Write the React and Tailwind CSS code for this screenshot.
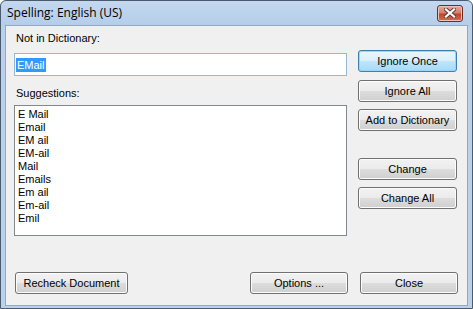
import React from 'react'

const suggestions = ['E Mail', 'Email', 'EM ail', 'EM-ail', 'Mail', 'Emails', 'Em ail', 'Em-ail', 'Emil']

function Button({ label, primary, className = '' }) {
  const look = primary
    ? 'border-[#3c7fb1] bg-[linear-gradient(#eaf6fd,#d9f0fc_50%,#bee6fd_50%,#a7d9f5)] shadow-[inset_0_0_0_1px_#9ad7f7]'
    : 'border-[#707070] bg-[linear-gradient(#f2f2f2,#ebebeb_50%,#dddddd_50%,#cfcfcf)] shadow-[inset_0_0_0_1px_#fcfcfc]'
  return (
    <button
      className={`h-[22px] rounded-[3px] border text-[11px] leading-none text-black flex items-center justify-center ${look} ${className}`}
    >
      {label}
    </button>
  )
}

export default function App() {
  return (
    <div
      className="w-[473px] h-[309px] flex flex-col rounded-t-[6px] border border-[#4b5a6e] bg-[linear-gradient(#c4d8ef,#b4cde9_25px,#b9d1ea_25px)] text-black"
      style={{ fontFamily: '"Liberation Sans", Arial, sans-serif' }}
    >
      {/* Title bar */}
      <div className="h-[24px] flex items-center justify-between pl-[6px] pr-[9px] shrink-0">
        <span className="text-[12px] leading-none text-black" style={{ fontFamily: '"Open Sans", "Liberation Sans", sans-serif' }}>
          Spelling: English (US)
        </span>
        <div className="w-[26px] h-[17px] rounded-[3px] border border-[#6e2d24] bg-[linear-gradient(#e9a99b,#d47f6d_45%,#c1432b_55%,#d0705a)] flex items-center justify-center shadow-[inset_0_0_0_1px_#f0c2b8]">
          <svg width="12" height="10" viewBox="0 0 12 10">
            <path d="M2 1.5 L10 8.5 M10 1.5 L2 8.5" stroke="#5a3a35" strokeWidth="4" strokeLinecap="square" />
            <path d="M2 1.5 L10 8.5 M10 1.5 L2 8.5" stroke="#ffffff" strokeWidth="2.2" strokeLinecap="square" />
          </svg>
        </div>
      </div>

      {/* Client area */}
      <div className="flex-1 mx-[4px] mb-[2px] border border-[#8fa9c6] bg-[#f0f0f0] flex flex-col">
        <div className="flex">
          {/* Left column */}
          <div className="w-[333px] ml-[8px] flex flex-col">
            <div className="mt-[6px] pl-[2px] text-[11px] leading-[13px]">Not in Dictionary:</div>
            <div className="mt-[8px] h-[23px] border border-[#98b8d8] bg-white flex items-center pl-[1px]">
              <span className="bg-[#3399ff] text-white text-[11px] leading-[14px] px-[1px]">EMail</span>
            </div>
            <div className="mt-[11px] pl-[2px] text-[11px] leading-[13px]">Suggestions:</div>
            <div className="mt-[5px] h-[131px] border border-[#828790] bg-white pt-[2px] pl-[3px]">
              {suggestions.map((s) => (
                <div key={s} className="text-[11px] leading-[13px]">{s}</div>
              ))}
            </div>
          </div>

          {/* Right column */}
          <div className="w-[99px] ml-[11px] mt-[24px] flex flex-col">
            <Button label="Ignore Once" primary />
            <Button label="Ignore All" className="mt-[8px]" />
            <Button label="Add to Dictionary" className="mt-[7px]" />
            <Button label="Change" className="mt-[27px]" />
            <Button label="Change All" className="mt-[7px]" />
          </div>
        </div>

        {/* Bottom row */}
        <div className="mt-auto mb-[11px] flex items-center pl-[9px] pr-[9px]">
          <Button label="Recheck Document" className="w-[113px]" />
          <Button label="Options ..." className="w-[98px] ml-auto" />
          <Button label="Close" className="w-[98px] ml-[12px]" />
        </div>
      </div>
    </div>
  )
}
